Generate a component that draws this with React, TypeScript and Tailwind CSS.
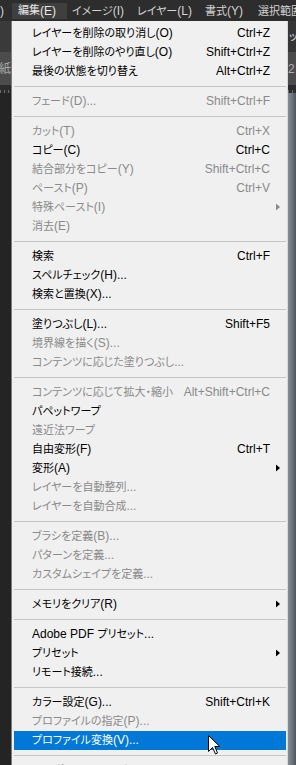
import React from 'react';

type MenuItem =
  | { sep: true }
  | { label: string; shortcut?: string; disabled?: boolean; submenu?: boolean; active?: boolean };

const items: MenuItem[] = [
  { label: 'レイヤーを削除の取り消し(O)', shortcut: 'Ctrl+Z' },
  { label: 'レイヤーを削除のやり直し(O)', shortcut: 'Shift+Ctrl+Z' },
  { label: '最後の状態を切り替え', shortcut: 'Alt+Ctrl+Z' },
  { sep: true },
  { label: 'フェード(D)...', shortcut: 'Shift+Ctrl+F', disabled: true },
  { sep: true },
  { label: 'カット(T)', shortcut: 'Ctrl+X', disabled: true },
  { label: 'コピー(C)', shortcut: 'Ctrl+C' },
  { label: '結合部分をコピー(Y)', shortcut: 'Shift+Ctrl+C', disabled: true },
  { label: 'ペースト(P)', shortcut: 'Ctrl+V', disabled: true },
  { label: '特殊ペースト(I)', disabled: true, submenu: true },
  { label: '消去(E)', disabled: true },
  { sep: true },
  { label: '検索', shortcut: 'Ctrl+F' },
  { label: 'スペルチェック(H)...' },
  { label: '検索と置換(X)...' },
  { sep: true },
  { label: '塗りつぶし(L)...', shortcut: 'Shift+F5' },
  { label: '境界線を描く(S)...', disabled: true },
  { label: 'コンテンツに応じた塗りつぶし...', disabled: true },
  { sep: true },
  { label: 'コンテンツに応じて拡大・縮小', shortcut: 'Alt+Shift+Ctrl+C', disabled: true },
  { label: 'パペットワープ' },
  { label: '遠近法ワープ', disabled: true },
  { label: '自由変形(F)', shortcut: 'Ctrl+T' },
  { label: '変形(A)', submenu: true },
  { label: 'レイヤーを自動整列...', disabled: true },
  { label: 'レイヤーを自動合成...', disabled: true },
  { sep: true },
  { label: 'ブラシを定義(B)...', disabled: true },
  { label: 'パターンを定義...', disabled: true },
  { label: 'カスタムシェイプを定義...', disabled: true },
  { sep: true },
  { label: 'メモリをクリア(R)', submenu: true },
  { sep: true },
  { label: 'Adobe PDF プリセット...' },
  { label: 'プリセット', submenu: true },
  { label: 'リモート接続...' },
  { sep: true },
  { label: 'カラー設定(G)...', shortcut: 'Shift+Ctrl+K' },
  { label: 'プロファイルの指定(P)...', disabled: true },
  { label: 'プロファイル変換(V)...', active: true },
  { sep: true },
  { label: 'キーボードショートカット...', shortcut: 'Alt+Shift+Ctrl+K' },
];

// japanese runs are set a bit smaller than the latin text, like the UI font
const jpRun = /([\u3000-\u9fff\uff00-\uffef]+)/;
const Jp = ({ text }: { text: string }) => (
  <>
    {text.split(jpRun).map((part, i) =>
      jpRun.test(part) ? (
        <span key={i} className="text-[11px]">
          {part}
        </span>
      ) : (
        <React.Fragment key={i}>{part}</React.Fragment>
      )
    )}
  </>
);

const Arrow = ({ color }: { color: string }) => (
  <svg width="4" height="7" viewBox="0 0 4 7" className="absolute right-[6px] top-1/2 -translate-y-1/2">
    <path d="M0 0 L4 3.5 L0 7 Z" fill={color} />
  </svg>
);

const Cursor = () => (
  <svg width="13" height="20" viewBox="0 0 13 20" className="absolute left-[208px] top-[735px]">
    <path
      d="M0.5 0.5 L0.5 16.5 L4.5 12.5 L7.5 19 L9.5 18 L6.8 11.5 L11.8 11.5 Z"
      fill="#ffffff"
      stroke="#000000"
      strokeWidth="1"
    />
  </svg>
);

const Ruler = () => (
  <div className="h-[8px] bg-[#2c2c2c] flex items-end gap-[3px] overflow-hidden">
    {Array.from({ length: 4 }).map((_, i) => (
      <div key={i} className="w-px h-[3px] bg-[#6a6a6a] shrink-0" />
    ))}
  </div>
);

export default function App() {
  return (
    <div className="relative w-[296px] h-[765px] overflow-hidden bg-[#262626] font-['Liberation_Sans','Noto_Sans_CJK_JP',sans-serif] text-[12px] [font-feature-settings:'palt']">
      {/* menu bar */}
      <div className="h-[21px] bg-[#2d2d2d] flex items-center text-[#d4d4d4] whitespace-nowrap">
        <span className="w-[12px] shrink-0">)</span>
        <span className="w-[55px] h-[16px] shrink-0 bg-[#3f3f3f] flex items-center pl-[6px] text-[#e8e8e8]">
          <Jp text="編集(E)" />
        </span>
        <span className="ml-[5px] w-[65px] shrink-0">
          <Jp text="イメージ(I)" />
        </span>
        <span className="w-[68px] shrink-0">
          <Jp text="レイヤー(L)" />
        </span>
        <span className="w-[53px] shrink-0">
          <Jp text="書式(Y)" />
        </span>
        <span className="shrink-0">
          <Jp text="選択範囲" />
        </span>
      </div>

      <div className="flex h-[744px]">
        {/* left strip */}
        <div className="w-[11px] shrink-0 flex flex-col">
          <div className="h-[31px] bg-[#3a3a3a]" />
          <div className="h-[33px] bg-[#4c4c4c] text-[#a8a8a8] flex items-center overflow-hidden">
            <span className="-ml-[1px]">紙</span>
          </div>
          <Ruler />
          <div className="flex-1 bg-[#242424]" />
        </div>

        {/* menu panel */}
        <div className="w-[277px] shrink-0 bg-[#f0f0f0] border-x border-l-[#7c7c7c] border-r-[#d8d8d8] pt-[2.5px]">
          {items.map((it, i) => {
            if ('sep' in it) {
              return (
                <div key={i} className="h-[11px] flex items-center ml-[2px] mr-[1px]">
                  <div className="h-px w-full bg-[#c6c6c6]" />
                </div>
              );
            }
            const color = it.active ? 'text-white' : it.disabled ? 'text-[#8a8a8a]' : 'text-black';
            const arrowColor = it.active ? '#ffffff' : it.disabled ? '#8a8a8a' : '#000000';
            return (
              <div
                key={i}
                className={`relative h-[19px] ml-[2px] mr-[1px] flex items-center pl-[18px] pr-[16px] whitespace-nowrap leading-[18px] ${color} ${it.active ? 'bg-[#0078d7]' : ''}`}
              >
                <span className="flex-1">
                  <Jp text={it.label} />
                </span>
                {it.shortcut && <span>{it.shortcut}</span>}
                {it.submenu && <Arrow color={arrowColor} />}
              </div>
            );
          })}
        </div>

        {/* right strip */}
        <div className="w-[8px] shrink-0 flex flex-col">
          <div className="h-[31px] bg-[#363636] text-[#e0e0e0] flex items-center overflow-hidden">
            <span className="ml-[1px] text-[11px]">ッ</span>
          </div>
          <div className="h-[33px] bg-[#4c4c4c] text-[#b0b0b0] flex items-center overflow-hidden">
            <span>2</span>
          </div>
          <Ruler />
          <div className="flex-1 bg-gradient-to-r from-[#848c96] via-[#6d7580] to-[#4f5660]" />
        </div>
      </div>

      <Cursor />
    </div>
  );
}
